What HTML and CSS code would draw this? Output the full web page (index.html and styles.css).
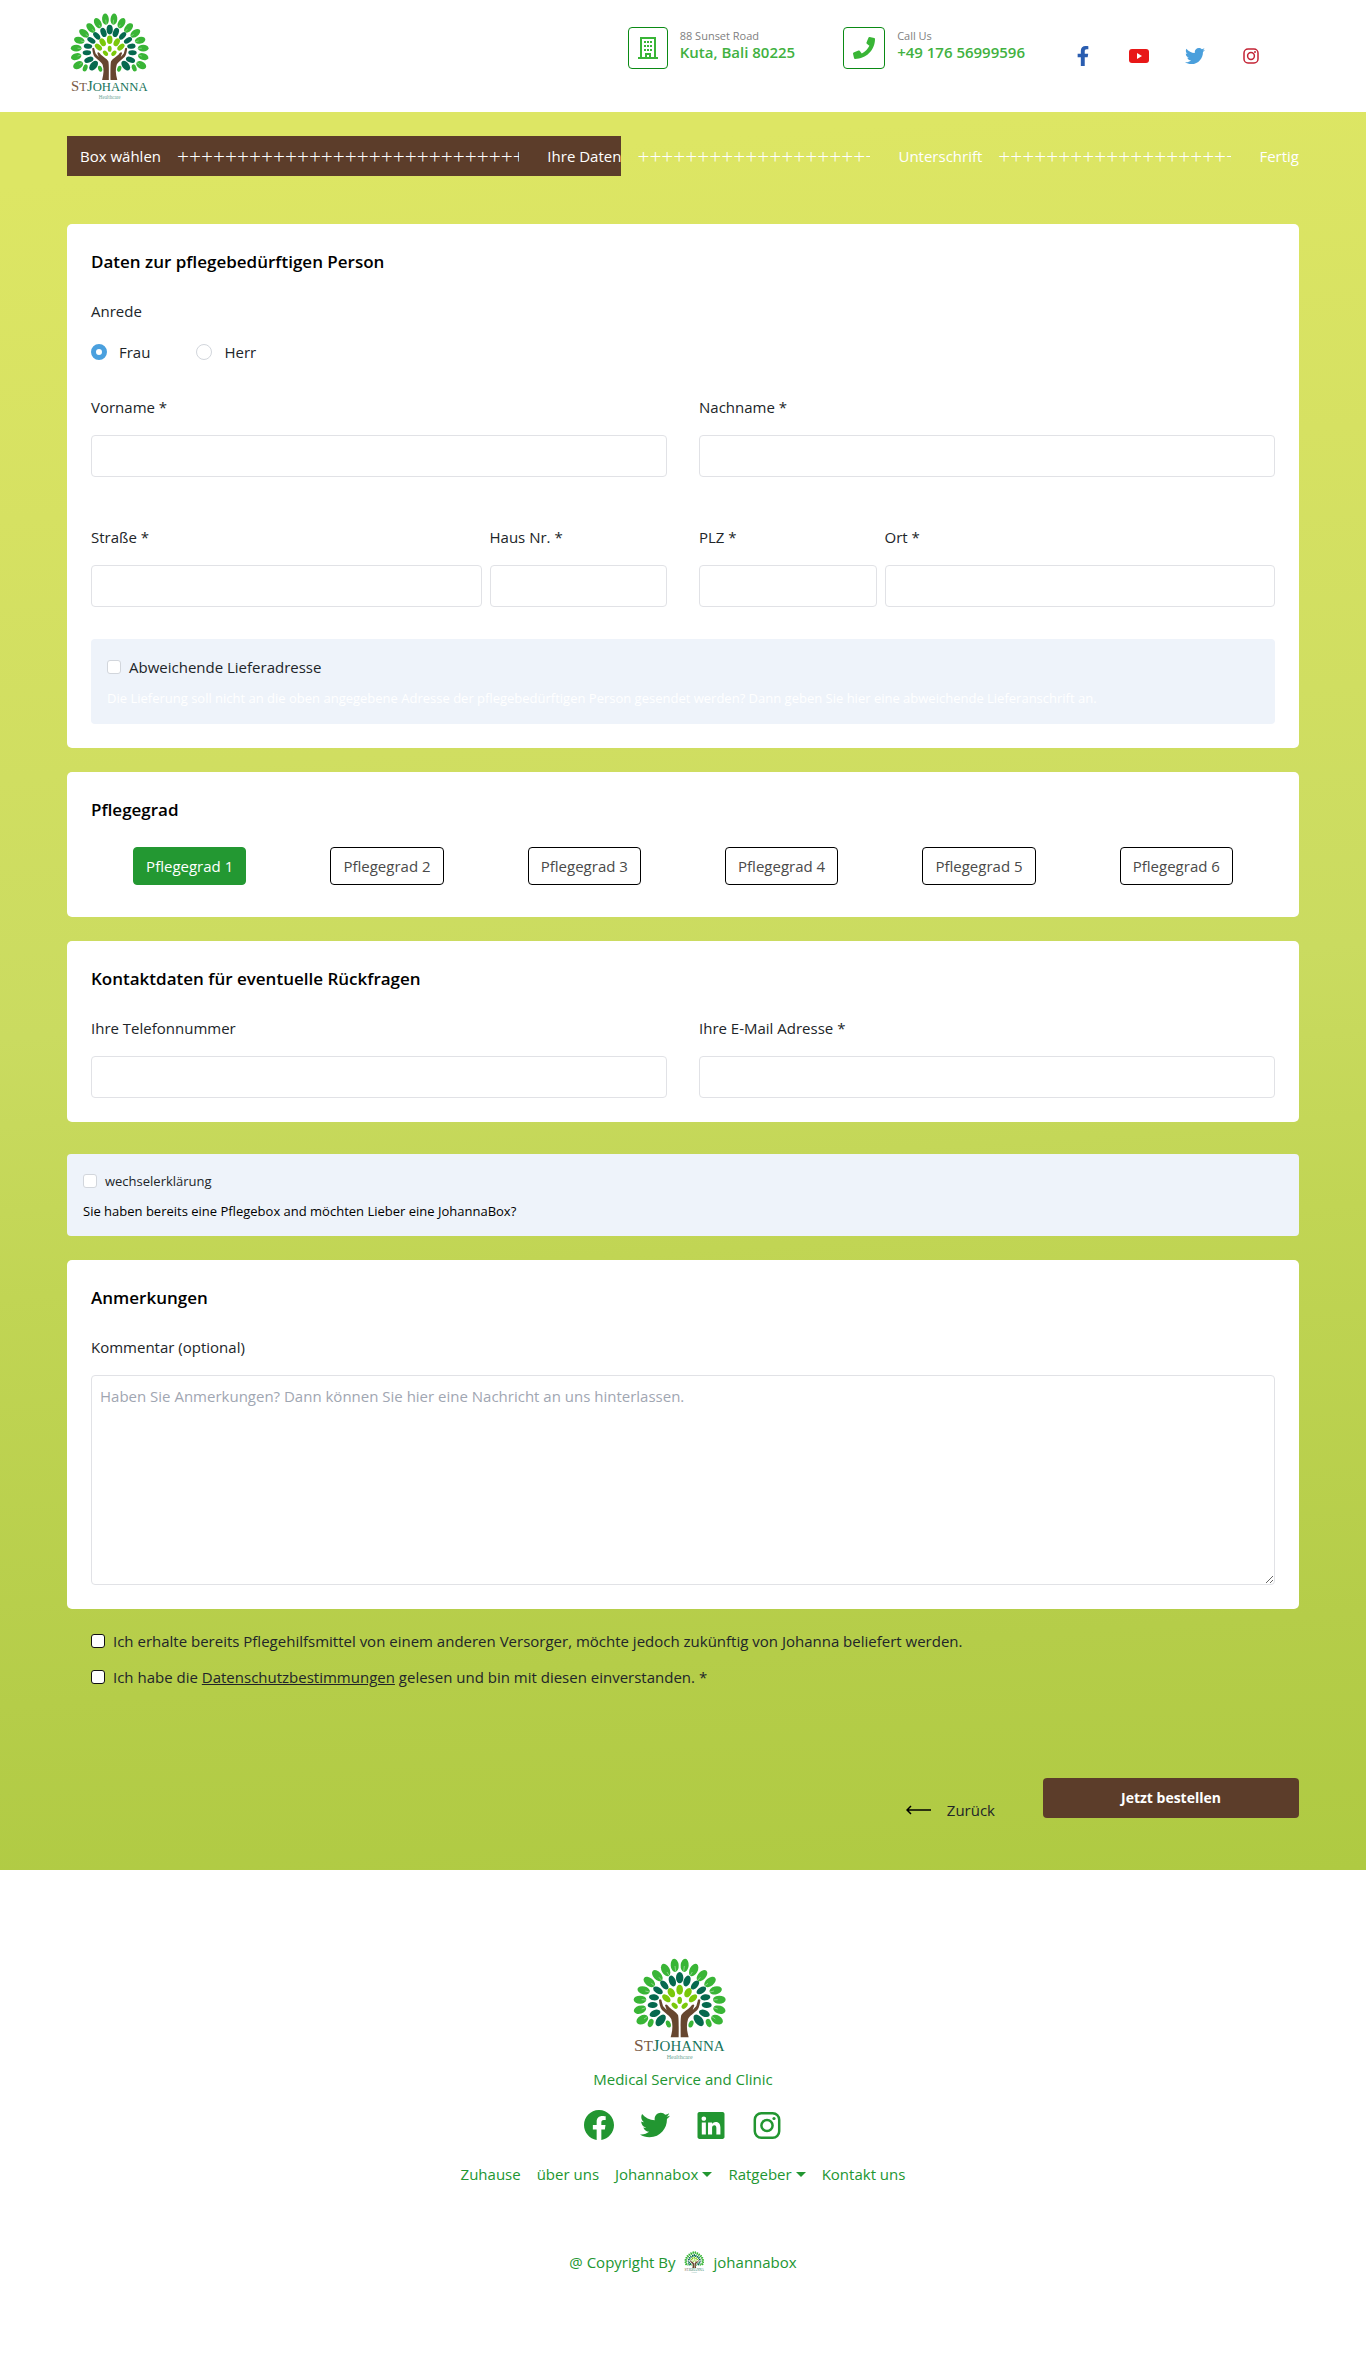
FILE: index.html
```html
<!DOCTYPE html>
<html lang="de">
<head>
<meta charset="utf-8">
<meta name="viewport" content="width=device-width, initial-scale=1">
<title>StJohanna – Ihre Daten</title>
<link rel="stylesheet" href="styles.css">
</head>
<body>
<svg class="sprite" aria-hidden="true">
  <defs>
    <g id="half-tree">
      <g fill="#39b536">
        <ellipse cx="702" cy="106" rx="12" ry="20" transform="rotate(-5 702 106)"/>
        <ellipse cx="675" cy="120" rx="12" ry="20" transform="rotate(-28 675 120)"/>
        <ellipse cx="650" cy="137" rx="12" ry="20" transform="rotate(-42 650 137)"/>
        <ellipse cx="626" cy="156" rx="12" ry="20" transform="rotate(-52 626 156)"/>
        <ellipse cx="609" cy="181" rx="12" ry="19" transform="rotate(-76 609 181)"/>
        <ellipse cx="598" cy="209" rx="12" ry="19" transform="rotate(-90 598 209)"/>
        <ellipse cx="598" cy="239" rx="12" ry="19" transform="rotate(-108 598 239)"/>
        <ellipse cx="605" cy="269" rx="13" ry="19" transform="rotate(-120 605 269)"/>
        <ellipse cx="630" cy="279" rx="8" ry="13" transform="rotate(20 630 279)"/>
        <ellipse cx="683" cy="282" rx="7" ry="11" transform="rotate(-20 683 282)"/>
      </g>
      <g fill="#06694e">
        <ellipse cx="695" cy="153" rx="10" ry="17" transform="rotate(-20 695 153)"/>
        <ellipse cx="671" cy="165" rx="9" ry="16" transform="rotate(-42 671 165)"/>
        <ellipse cx="652" cy="181" rx="9" ry="16" transform="rotate(-58 652 181)"/>
        <ellipse cx="640" cy="202" rx="9" ry="15" transform="rotate(-82 640 202)"/>
        <ellipse cx="636" cy="225" rx="9" ry="15" transform="rotate(-92 636 225)"/>
        <ellipse cx="643" cy="250" rx="10" ry="17" transform="rotate(68 643 250)"/>
        <ellipse cx="660" cy="271" rx="12" ry="20" transform="rotate(38 660 271)"/>
      </g>
      <g fill="#7ac80a">
        <ellipse cx="692" cy="188" rx="10" ry="15" transform="rotate(-28 692 188)"/>
        <ellipse cx="677" cy="205" rx="9" ry="15" transform="rotate(-48 677 205)"/>
        <ellipse cx="702" cy="227" rx="7" ry="11" transform="rotate(-45 702 227)"/>
      </g>
      <path fill="#66462f" d="M690 322C696 300 697 284 692 268C688 258 672 248 664 240C658 233 656 220 655 210C658 205 663 208 663 214L667 228L678 240L673 226C676 220 681 225 685 231C693 239 706 245 712 255C715 264 714 300 714 322Z"/>
      <g stroke="#fff" stroke-width="2" stroke-opacity=".6">
        <path d="M703 108L705 124M679 126L685 136M655 142L663 151M632 160L642 167M614 183L626 186M603 209L616 210M603 237L615 233M610 267L620 260"/>
      </g>
    </g>
    <symbol id="logo" viewBox="577 84 300 309">
      <use href="#half-tree"/>
      <use href="#half-tree" transform="translate(1434 0) scale(-1 1)"/>
      <ellipse cx="717" cy="143" rx="11" ry="17" fill="#06694e"/>
      <ellipse cx="717" cy="179" rx="10" ry="15" fill="#7ac80a"/>
      <ellipse cx="717" cy="211" rx="7" ry="11" fill="#7ac80a"/>
      <text class="logo-name" x="580" y="362"><tspan class="logo-brown logo-cap">S</tspan><tspan class="logo-brown">T</tspan><tspan class="logo-cap">J</tspan>OHANNA</text>
      <text class="logo-sub" x="717" y="388" text-anchor="middle">Healthcare</text>
    </symbol>
    <symbol id="twitter" viewBox="0 0 512 512"><path fill="currentColor" d="M459.37 151.716c.325 4.548.325 9.097.325 13.645 0 138.72-105.583 298.558-298.558 298.558-59.452 0-114.68-17.219-161.137-47.106 8.447.974 16.568 1.299 25.34 1.299 49.055 0 94.213-16.568 130.274-44.832-46.132-.975-84.792-31.188-98.112-72.772 6.498.974 12.995 1.624 19.818 1.624 9.421 0 18.843-1.3 27.614-3.573-48.081-9.747-84.143-51.98-84.143-102.985v-1.299c13.969 7.797 30.214 12.67 47.431 13.319-28.264-18.843-46.781-51.005-46.781-87.391 0-19.492 5.197-37.36 14.294-52.954 51.655 63.675 129.3 105.258 216.365 109.807-1.624-7.797-2.599-15.918-2.599-24.04 0-57.828 46.782-104.934 104.934-104.934 30.213 0 57.502 12.67 76.67 33.137 23.715-4.548 46.456-13.32 66.599-25.34-7.798 24.366-24.366 44.833-46.132 57.827 21.117-2.273 41.584-8.122 60.426-16.243-14.292 20.791-32.161 39.308-52.628 54.253z"/></symbol>
    <symbol id="instagram" viewBox="0 0 27 27"><rect x="1.300" y="1.300" width="24.400" height="24.400" rx="6.500" fill="none" stroke="currentColor" stroke-width="2.500"/><circle cx="13.500" cy="13.500" r="5.600" fill="none" stroke="currentColor" stroke-width="2.500"/><circle cx="20.500" cy="6.500" r="1.600" fill="currentColor"/></symbol>
  </defs>
</svg>

<header class="site-header">
  <a class="brand" href="#" aria-label="StJohanna"><svg class="logo-header"><use href="#logo"/></svg></a>
  <div class="contact">
    <span class="contact-icon"><svg width="20" height="24" viewBox="0 0 20 24" fill="none" stroke="currentColor"><path stroke-width="2" d="M3 22V2h14v20M0 22h20"/><path stroke-width="2" d="M6 6h2M9 6h2M12 6h2M6 10h2M9 10h2M12 10h2M6 14h2M9 14h2M12 14h2"/><path stroke-width="2" d="M8 22v-4h4v4"/></svg></span>
    <p class="contact-text"><span>88 Sunset Road</span><strong>Kuta, Bali 80225</strong></p>
  </div>
  <div class="contact">
    <span class="contact-icon wide"><svg width="22" height="22" viewBox="0 0 512 512"><path fill="currentColor" d="M493.400 24.600l-104-24c-11.300-2.600-22.900 3.300-27.500 13.900l-48 112c-4.200 9.800-1.400 21.300 6.900 28l60.600 49.600c-36 76.700-98.900 140.500-177.200 177.200l-49.600-60.600c-6.800-8.300-18.200-11.100-28-6.900l-112 48C3.900 366.500-2 378.100.6 389.400l24 104C27.100 504.200 36.700 512 48 512c256.100 0 464-207.500 464-464 0-11.200-7.700-20.900-18.600-23.400z"/></svg></span>
    <p class="contact-text"><span>Call Us</span><strong>+49 176 56999596</strong></p>
  </div>
  <nav class="social" aria-label="Social Media">
    <a class="fb" href="#" aria-label="Facebook"><svg width="20" height="20" viewBox="0 0 320 512"><path fill="currentColor" d="M279.140 288l14.220-92.660h-88.910v-60.130c0-25.350 12.420-50.060 52.240-50.060h40.420V6.260S260.430 0 225.360 0c-73.220 0-121.080 44.380-121.080 124.720v70.620H22.890V288h81.390v224h100.170V288z"/></svg></a>
    <a class="yt" href="#" aria-label="YouTube"><svg width="20" height="20" viewBox="0 0 20 20"><rect y="3" width="20" height="14" rx="3" fill="currentColor"/><path fill="#fff" d="M8 7l5 3-5 3z"/></svg></a>
    <a class="tw" href="#" aria-label="Twitter"><svg width="20" height="20"><use href="#twitter"/></svg></a>
    <a class="ig" href="#" aria-label="Instagram"><svg width="20" height="20" viewBox="0 0 20 20"><rect x="3" y="3" width="14" height="14" rx="4" fill="none" stroke="currentColor" stroke-width="1.500"/><circle cx="10" cy="10" r="3.400" fill="none" stroke="currentColor" stroke-width="1.500"/><circle cx="14" cy="6" r="1" fill="currentColor"/></svg></a>
  </nav>
</header>

<main class="order">
  <div class="steps">
    <div class="steps-done">
      <span>Box wählen</span>
      <span class="plus" aria-hidden="true">+++++++++++++++++++++++++++++</span>
      <span>Ihre Daten</span>
    </div>
    <div class="steps-open">
      <span class="plus" aria-hidden="true">++++++++++++++++++++</span>
      <span>Unterschrift</span>
      <span class="plus" aria-hidden="true">++++++++++++++++++++</span>
      <span>Fertig</span>
    </div>
  </div>

  <form class="form">
    <section class="card">
      <h2>Daten zur pflegebedürftigen Person</h2>
      <div class="salutation" role="radiogroup" aria-labelledby="anrede">
        <p class="label" id="anrede">Anrede</p>
        <div class="radios">
          <label><input type="radio" name="anrede" checked>Frau</label>
          <label><input type="radio" name="anrede">Herr</label>
        </div>
      </div>
      <div class="row">
        <div class="field"><label for="vorname">Vorname *</label><input id="vorname" type="text"></div>
        <div class="field"><label for="nachname">Nachname *</label><input id="nachname" type="text"></div>
      </div>
      <div class="row address">
        <div class="pair wide-first">
          <div class="field"><label for="strasse">Straße *</label><input id="strasse" type="text"></div>
          <div class="field"><label for="hausnr">Haus Nr. *</label><input id="hausnr" type="text"></div>
        </div>
        <div class="pair wide-last">
          <div class="field"><label for="plz">PLZ *</label><input id="plz" type="text"></div>
          <div class="field"><label for="ort">Ort *</label><input id="ort" type="text"></div>
        </div>
      </div>
      <div class="notice delivery">
        <label class="check"><input type="checkbox">Abweichende Lieferadresse</label>
        <p>Die Lieferung soll nicht an die oben angegebene Adresse der pflegebedürftigen Person gesendet werden? Dann geben Sie hier eine abweichende Lieferanschrift an.</p>
      </div>
    </section>

    <section class="card grade">
      <h2>Pflegegrad</h2>
      <div class="grades">
        <button type="button" class="active">Pflegegrad 1</button>
        <button type="button">Pflegegrad 2</button>
        <button type="button">Pflegegrad 3</button>
        <button type="button">Pflegegrad 4</button>
        <button type="button">Pflegegrad 5</button>
        <button type="button">Pflegegrad 6</button>
      </div>
    </section>

    <section class="card">
      <h2>Kontaktdaten für eventuelle Rückfragen</h2>
      <div class="row first">
        <div class="field"><label for="tel">Ihre Telefonnummer</label><input id="tel" type="tel"></div>
        <div class="field"><label for="mail">Ihre E-Mail Adresse *</label><input id="mail" type="email"></div>
      </div>
    </section>

    <div class="notice change">
      <label class="check small"><input type="checkbox">wechselerklärung</label>
      <p>Sie haben bereits eine Pflegebox and möchten Lieber eine JohannaBox?</p>
    </div>

    <section class="card">
      <h2>Anmerkungen</h2>
      <div class="field first">
        <label for="kommentar">Kommentar (optional)</label>
        <textarea id="kommentar" placeholder="Haben Sie Anmerkungen? Dann können Sie hier eine Nachricht an uns hinterlassen."></textarea>
      </div>
    </section>

    <div class="consents">
      <label class="check dark"><input type="checkbox"><span>Ich erhalte bereits Pflegehilfsmittel von einem anderen Versorger, möchte jedoch zukünftig von Johanna beliefert werden.</span></label>
      <label class="check dark"><input type="checkbox"><span>Ich habe die <a href="#">Datenschutzbestimmungen</a> gelesen und bin mit diesen einverstanden. *</span></label>
    </div>

    <div class="actions">
      <a class="back" href="#"><svg width="25" height="10" viewBox="0 0 25 10" fill="none" stroke="#000" stroke-width="1.500"><path d="M25 5H1M5 1L1 5l4 4"/></svg>Zurück</a>
      <button type="submit" class="submit">Jetzt bestellen</button>
    </div>
  </form>
</main>

<footer class="site-footer">
  <svg class="logo-footer" role="img" aria-label="StJohanna Healthcare"><use href="#logo"/></svg>
  <p class="tagline">Medical Service and Clinic</p>
  <div class="footer-social">
    <a href="#" aria-label="Facebook"><svg width="30" height="30" viewBox="0 0 16 16"><path fill="currentColor" d="M16 8.049c0-4.446-3.582-8.050-8-8.050C3.580 0 0 3.603 0 8.050c0 4.017 2.926 7.347 6.750 7.951v-5.625h-2.030V8.050H6.750V6.275c0-2.017 1.195-3.131 3.022-3.131.876 0 1.791.157 1.791.157v1.980h-1.009c-.993 0-1.303.621-1.303 1.258v1.510h2.218l-.354 2.326H9.250V16c3.824-.604 6.750-3.934 6.750-7.951z"/></svg></a>
    <a href="#" aria-label="Twitter"><svg width="30" height="30"><use href="#twitter"/></svg></a>
    <a href="#" aria-label="LinkedIn"><svg width="30" height="27" viewBox="0 0 16 16"><path fill="currentColor" d="M0 1.146C0 .513.526 0 1.175 0h13.650C15.474 0 16 .513 16 1.146v13.708c0 .633-.526 1.146-1.175 1.146H1.175C.526 16 0 15.487 0 14.854V1.146zm4.943 12.248V6.169H2.542v7.225h2.401zm-1.200-8.212c.837 0 1.358-.554 1.358-1.248-.015-.709-.520-1.248-1.342-1.248-.822 0-1.359.540-1.359 1.248 0 .694.521 1.248 1.327 1.248h.016zm4.908 8.212V9.359c0-.216.016-.432.080-.586.173-.431.568-.878 1.232-.878.869 0 1.216.662 1.216 1.634v3.865h2.401V9.250c0-2.220-1.184-3.252-2.764-3.252-1.274 0-1.845.700-2.165 1.193v.025h-.016a5.540 5.540 0 0 1 .016-.025V6.169h-2.400c.030.678 0 7.225 0 7.225h2.400z"/></svg></a>
    <a href="#" aria-label="Instagram"><svg width="30" height="27"><use href="#instagram"/></svg></a>
  </div>
  <nav class="footer-nav">
    <a href="#">Zuhause</a>
    <a href="#">über uns</a>
    <a class="has-menu" href="#">Johannabox</a>
    <a class="has-menu" href="#">Ratgeber</a>
    <a href="#">Kontakt uns</a>
  </nav>
  <p class="copyright">@ Copyright By <svg class="logo-mini" aria-hidden="true"><use href="#logo"/></svg> johannabox</p>
</footer>
</body>
</html>
```
FILE: styles.css
```css
* { box-sizing: border-box; }

body {
  margin: 0;
  background: #fff;
  color: #212529;
  font: 15px/24px "Open Sans", "Noto Sans", sans-serif;
}

p, h2 { margin: 0; }
a { color: inherit; text-decoration: none; }
svg { display: block; flex: none; }
input, textarea, button { font: inherit; }

.sprite { position: absolute; width: 0; height: 0; }

/* Logo */
.logo-name { font: 45px "Liberation Serif", serif; fill: #17735a; }
.logo-cap { font-size: 52px; }
.logo-brown { fill: #7a5a45; }
.logo-sub { font: 18px "Liberation Serif", serif; fill: #6aa596; }
.logo-header { width: 85px; height: 87px; }
.logo-footer { width: 100px; height: 103px; }
.logo-mini { width: 22px; height: 22px; }

/* Header */
.site-header {
  display: flex;
  align-items: center;
  min-height: 112px;
  padding: 0 105px 0 70px;
}
.brand { margin-right: auto; }
.contact { display: flex; gap: 12px; margin: 0 48px 16px 0; }
.contact-icon {
  display: grid;
  place-items: center;
  width: 40px;
  height: 42px;
  border: 1px solid #0a8a14;
  border-radius: 4px;
  color: #39b536;
}
.contact-icon.wide { width: 42px; }
.contact-text { display: grid; align-content: start; line-height: 17px; color: #41b13f; }
.contact-text span { font-size: 11px; color: #808080; }
.contact-text strong { font-weight: 600; font-size: 15px; }
.social { display: flex; gap: 36px; }
.fb { color: #2a5db0; }
.yt { color: #e81717; }
.tw { color: #4a9fdc; }
.ig { color: #c32335; }

/* Order page */
.order {
  padding: 24px 67px 48px;
  background: linear-gradient(176deg, #dde664 4%, #d6e162 22%, #cadb60 50%, #c1d554 64%, #b5cd49 86%, #afca42 100%);
}
.steps { display: flex; height: 40px; color: #fff; }
.steps-done, .steps-open { display: flex; align-items: center; gap: 16px; white-space: nowrap; }
.steps-done { width: 45%; padding-left: 13px; background: #5c3d2a; }
.steps-open { flex: 1; padding-left: 16px; min-width: 0; }
.plus { flex: 1 1 0; min-width: 0; margin-right: 12px; overflow: hidden; font-size: 21px; font-weight: 300; }

.form { margin-top: 48px; }
.card { padding: 24px; margin-bottom: 24px; border-radius: 5px; background: #fff; }
.card h2 { font-size: 17px; line-height: 28px; font-weight: 600; color: #000; }

.salutation { margin-top: 23px; }
.radios { display: flex; gap: 46px; margin-top: 17px; }
.radios label { display: flex; align-items: center; gap: 12px; }
.radios input {
  appearance: none;
  width: 16px;
  height: 16px;
  margin: 0;
  border: 1px solid #d2d6dc;
  border-radius: 50%;
  background: #fff;
}
.radios input:checked { border: 5px solid #4aa0de; }

.row { display: grid; grid-template-columns: 1fr 1fr; gap: 32px; margin-top: 31px; }
.row.address { margin-top: 48px; }
.pair { display: grid; gap: 8px; }
.wide-first { grid-template-columns: 11fr 5fr; }
.wide-last { grid-template-columns: 5fr 11fr; }
.field { display: flex; flex-direction: column; gap: 16px; min-width: 0; }
.row.first, .field.first { margin-top: 23px; }
.field input, .field textarea {
  width: 100%;
  min-width: 0;
  height: 42px;
  padding: 8px;
  border: 1px solid #e1e2e6;
  border-radius: 4px;
  background: #fff;
}
.field textarea { height: 210px; resize: vertical; }
.field textarea::placeholder { color: #9fa6b2; }

.notice { padding: 16px; border-radius: 4px; background: #eef3fa; font-size: 13px; }
.notice p { line-height: 20px; }
.delivery { margin-top: 32px; }
.delivery p { margin-top: 9px; color: #fff; }
.change { margin: 32px 0 24px; padding: 15px 16px; }
.change p { margin-top: 8px; color: #000; }

.check { display: flex; align-items: center; gap: 8px; font-size: 15px; }
.check.small { font-size: 13px; }
.check input {
  appearance: none;
  flex: none;
  width: 14px;
  height: 14px;
  margin: 0;
  border: 1px solid #d2d6dc;
  border-radius: 3px;
  background: #fff;
}
.check.dark input { border-color: #111; }
.check a { text-decoration: underline; }

.grade { padding-bottom: 32px; }
.grades { display: grid; grid-template-columns: repeat(6, 1fr); justify-items: center; margin-top: 23px; }
.grades button {
  height: 38px;
  padding: 0 12px;
  border: 1px solid #000;
  border-radius: 4px;
  background: #fff;
  color: #4a4a4a;
}
.grades .active { border-color: #239832; background: #239832; color: #fff; }

.consents { display: grid; gap: 12px; padding: 0 24px; margin-top: -4px; }
.actions { display: flex; gap: 48px; justify-content: flex-end; align-items: flex-start; margin-top: 89px; }
.back { display: flex; align-items: center; gap: 16px; margin-top: 20px; font-weight: 500; }
.submit { width: 256px; height: 40px; border: 0; border-radius: 4px; background: #5c3d2a; color: #fff; font-weight: 700; font-size: 14px; }

/* Footer */
.site-footer {
  display: flex;
  flex-direction: column;
  align-items: center;
  padding: 88px 16px 83px;
  color: #229631;
}
.tagline { margin-top: 6px; }
.footer-social { display: flex; align-items: center; gap: 26px; margin-top: 19px; }
.footer-nav { display: flex; gap: 16px; margin-top: 22px; }
.has-menu { display: flex; align-items: center; gap: 4px; }
.has-menu::after { content: ""; border: 5px solid transparent; border-top-color: currentColor; border-bottom: 0; }
.copyright { display: flex; align-items: center; gap: 8px; margin-top: 64px; }
```
